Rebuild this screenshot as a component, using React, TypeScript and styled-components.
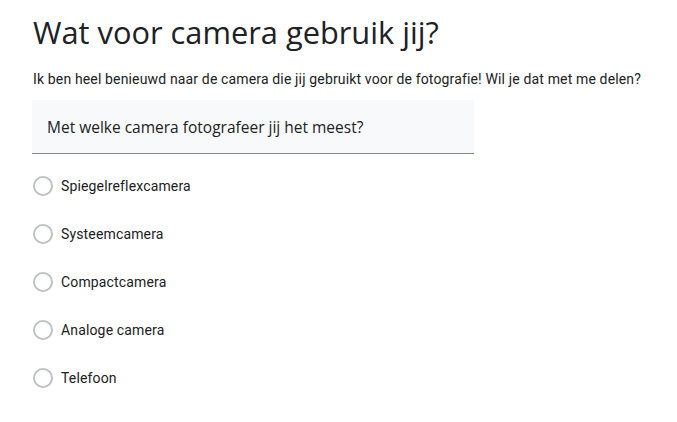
import React from "react";
import styled, { createGlobalStyle } from "styled-components";

const Global = createGlobalStyle`
  html, body { margin: 0; padding: 0; background: #fff; }
  body { font-family: Roboto, Arial, sans-serif; color: #202124; }
`;

const Page = styled.div`
  padding: 12px 0 0 33px;
  width: 644px;
  display: flex;
  flex-direction: column;
`;

const Title = styled.h1`
  margin: 0;
  font-family: "Open Sans", Arial, sans-serif;
  font-weight: 400;
  font-size: 30.8px;
  line-height: 40px;
  color: #202124;
`;

const Description = styled.p`
  margin: 17px 0 0;
  font-family: Roboto, Arial, sans-serif;
  font-size: 14px;
  line-height: 20px;
  color: #202124;
  letter-spacing: 0.15px;
  white-space: nowrap;
`;

const QuestionBox = styled.div`
  margin: 11px 0 0 -1px;
  width: 442px;
  height: 54px;
  box-sizing: border-box;
  background: #f8f9fa;
  border-bottom: 1px solid #80868b;
  display: flex;
  align-items: center;
  padding: 0 0 0 15px;
  font-family: "Open Sans", Arial, sans-serif;
  font-size: 15.5px;
  color: #202124;
`;

const Options = styled.div`
  display: flex;
  flex-direction: column;
  margin-top: 8px;
`;

const Option = styled.label`
  display: flex;
  align-items: center;
  height: 48px;
  gap: 8px;
  font-family: Roboto, Arial, sans-serif;
  font-size: 14px;
  color: #202124;
  letter-spacing: 0.15px;
`;

const Radio = styled.span`
  width: 20px;
  height: 20px;
  box-sizing: border-box;
  border: 2px solid #bdc1c6;
  border-radius: 50%;
  flex: none;
`;

const options = [
  "Spiegelreflexcamera",
  "Systeemcamera",
  "Compactcamera",
  "Analoge camera",
  "Telefoon",
];

export default function App() {
  return (
    <>
      <Global />
      <Page>
        <Title>Wat voor camera gebruik jij?</Title>
        <Description>
          Ik ben heel benieuwd naar de camera die jij gebruikt voor de fotografie! Wil je dat met me delen?
        </Description>
        <QuestionBox>Met welke camera fotografeer jij het meest?</QuestionBox>
        <Options>
          {options.map((o) => (
            <Option key={o}>
              <Radio />
              {o}
            </Option>
          ))}
        </Options>
      </Page>
    </>
  );
}
